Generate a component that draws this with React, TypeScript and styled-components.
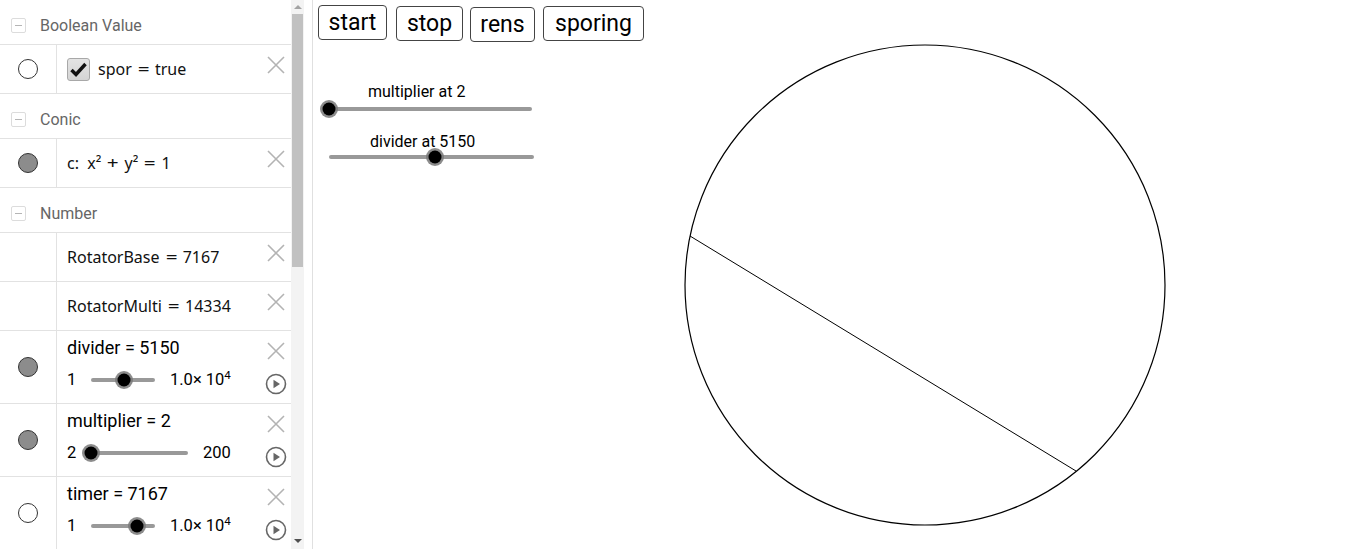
import React from "react";
import styled, { createGlobalStyle } from "styled-components";

const GlobalStyle = createGlobalStyle`
  html, body {
    margin: 0;
    padding: 0;
    background: #fff;
    overflow: hidden;
  }
  body {
    font-family: Roboto, "Liberation Sans", sans-serif;
    color: #000;
  }
`;

const Page = styled.div`
  display: flex;
  width: 1347px;
  height: 549px;
  overflow: hidden;
`;

/* ---------- algebra view ---------- */

const AlgebraView = styled.div`
  width: 291px;
  height: 549px;
  overflow: hidden;
  display: flex;
  flex-direction: column;
  flex-shrink: 0;
`;

const GroupHeader = styled.div`
  height: 38px;
  flex-shrink: 0;
  padding-top: 6px;
  border-bottom: 1px solid #e2e2e2;
  display: flex;
  align-items: center;
  padding-left: 11px;
  gap: 14px;
  color: #666;
  font-size: 16px;
`;

const Collapse = styled.span`
  width: 13px;
  height: 13px;
  border: 1px solid #dcdcdc;
  border-radius: 2px;
  display: flex;
  align-items: center;
  justify-content: center;

  &::after {
    content: "";
    width: 7px;
    height: 1px;
    background: #b5b5b5;
  }
`;

const ItemRow = styled.div<{ $tall?: boolean }>`
  display: flex;
  flex-shrink: 0;
  height: ${(p) => (p.$tall ? 72 : 48)}px;
  border-bottom: 1px solid #e2e2e2;
`;

const MarkerCell = styled.div`
  width: 56px;
  border-right: 1px solid #e2e2e2;
  display: flex;
  align-items: center;
  justify-content: center;
`;

const Marker = styled.span<{ $filled?: boolean }>`
  width: 18px;
  height: 18px;
  border-radius: 50%;
  border: 1px solid #333;
  background: ${(p) => (p.$filled ? "#8c8c8c" : "#fff")};
`;

const ContentCell = styled.div`
  flex: 1;
  display: flex;
  padding-left: 10px;
`;

const Body = styled.div<{ $tall?: boolean }>`
  flex: 1;
  display: flex;
  flex-direction: column;
  justify-content: ${(p) => (p.$tall ? "flex-start" : "center")};
  padding-top: ${(p) => (p.$tall ? 6 : 0)}px;
`;

const MathText = styled.div`
  font-family: "Noto Sans", "DejaVu Sans", sans-serif;
  font-size: 16px;
  display: flex;
  align-items: center;
  line-height: 20px;
  color: #111;
`;

const Op = styled.span`
  margin: 0 7px;
  display: inline-block;
  transform: scaleX(1.3);
`;

const Sup = styled.sup`
  font-size: 0.7em;
  vertical-align: 0.55em;
  line-height: 0;
`;

const Title = styled.div`
  font-size: 18px;
  line-height: 22px;
`;

const Tools = styled.div`
  width: 30px;
  display: flex;
  flex-direction: column;
  align-items: center;
  padding-top: 11px;
  gap: 13px;
`;

const CheckBox = styled.span`
  width: 21px;
  height: 21px;
  margin-right: 8px;
  border: 1px solid #a8a8a8;
  border-radius: 3px;
  background: linear-gradient(#e4e4e4, #d4d4d4);
  display: flex;
  align-items: center;
  justify-content: center;
`;

const SliderLine = styled.div`
  display: flex;
  align-items: center;
  margin-top: 11px;
  font-size: 16.5px;
`;

const MinLabel = styled.span`
  width: 24px;
`;

const MaxLabel = styled.span`
  margin-left: 15px;
`;

const Track = styled.div<{ $w: number }>`
  position: relative;
  width: ${(p) => p.$w}px;
  height: 4px;
  background: #999;
  border-radius: 2px;
`;

const Thumb = styled.span`
  position: absolute;
  top: 50%;
  width: 13px;
  height: 13px;
  border-radius: 50%;
  background: #000;
  box-shadow: 0 0 0 2.5px rgba(120, 120, 120, 0.85);
  transform: translate(-50%, -50%);
`;

const CloseIcon = () => (
  <svg width="18" height="18" viewBox="0 0 18 18">
    <path d="M1 1 L17 17 M17 1 L1 17" stroke="#b3b3b3" strokeWidth="1.6" fill="none" />
  </svg>
);

const PlayIcon = () => (
  <svg width="22" height="22" viewBox="0 0 22 22">
    <circle cx="11" cy="11" r="9.5" stroke="#666" strokeWidth="1.6" fill="none" />
    <path d="M8.5 6.8 L15 11 L8.5 15.2 Z" fill="#666" />
  </svg>
);

const CheckMark = () => (
  <svg width="17" height="15" viewBox="0 0 17 15">
    <path d="M1.5 8 L6 12.5 L15.5 2" stroke="#111" strokeWidth="3.4" fill="none" />
  </svg>
);

const Ten4 = () => (
  <span>
    1.0× 10<Sup>4</Sup>
  </span>
);

type SliderItem = {
  title: string;
  min: string;
  max: React.ReactNode;
  width: number;
  frac: number;
  filled: boolean;
};

const sliderItems: SliderItem[] = [
  { title: "divider = 5150", min: "1", max: <Ten4 />, width: 64, frac: 0.515, filled: true },
  { title: "multiplier = 2", min: "2", max: "200", width: 97, frac: 0, filled: true },
  { title: "timer = 7167", min: "1", max: <Ten4 />, width: 64, frac: 0.7166, filled: false },
];

const SimpleItem = ({
  marker,
  children,
}: {
  marker?: "filled" | "empty";
  children: React.ReactNode;
}) => (
  <ItemRow>
    <MarkerCell>{marker && <Marker $filled={marker === "filled"} />}</MarkerCell>
    <ContentCell>
      <Body>{children}</Body>
      <Tools>
        <CloseIcon />
      </Tools>
    </ContentCell>
  </ItemRow>
);

const Header = ({ label }: { label: string }) => (
  <GroupHeader>
    <Collapse />
    {label}
  </GroupHeader>
);

/* ---------- scrollbar ---------- */

const Scrollbar = styled.div`
  width: 13px;
  flex-shrink: 0;
  background: #f3f3f3;
  display: flex;
  flex-direction: column;
  align-items: center;
`;

const Arrow = styled.span<{ $down?: boolean }>`
  width: 0;
  height: 0;
  border-left: 4px solid transparent;
  border-right: 4px solid transparent;
  ${(p) =>
    p.$down
      ? "border-top: 4px solid #505050; margin-top: auto; margin-bottom: 6px;"
      : "border-bottom: 4px solid #a3a3a3; margin-top: 5px;"}
`;

const ScrollThumb = styled.div`
  width: 11px;
  height: 253px;
  margin-top: 5px;
  background: #c1c1c1;
`;

const Splitter = styled.div`
  width: 8px;
  flex-shrink: 0;
  border-right: 1px solid #e0e0e0;
  background: #fff;
`;

/* ---------- graphics view ---------- */

const Graphics = styled.div`
  position: relative;
  flex: 1;
  height: 549px;
`;

const ButtonBar = styled.div`
  position: absolute;
  left: 5px;
  top: 5px;
  display: flex;
  align-items: flex-start;
`;

const GgbButton = styled.button<{ $w: number; $dy: number; $gap: number }>`
  width: ${(p) => p.$w}px;
  height: 35px;
  margin-top: ${(p) => p.$dy}px;
  margin-right: ${(p) => p.$gap}px;
  padding: 0;
  border: 1px solid #444;
  border-radius: 4px;
  background: #fff;
  font-family: Roboto, "Liberation Sans", sans-serif;
  font-size: 23px;
  line-height: 30px;
  color: #000;
`;

const CanvasSlider = styled.div<{ $x: number; $y: number }>`
  position: absolute;
  left: ${(p) => p.$x}px;
  top: ${(p) => p.$y}px;
  display: flex;
  flex-direction: column;
`;

const SliderLabel = styled.span<{ $indent: number; $gap: number }>`
  margin-left: ${(p) => p.$indent}px;
  font-size: 16px;
  line-height: 18px;
  margin-bottom: ${(p) => p.$gap}px;
`;

const buttons = [
  { label: "start", w: 69, dy: 0, gap: 9 },
  { label: "stop", w: 67, dy: 1, gap: 7 },
  { label: "rens", w: 65, dy: 2, gap: 8 },
  { label: "sporing", w: 101, dy: 1, gap: 0 },
];

const App = () => (
  <>
    <GlobalStyle />
    <Page>
      <AlgebraView>
        <Header label="Boolean Value" />
        <SimpleItem marker="empty">
          <MathText>
            <CheckBox>
              <CheckMark />
            </CheckBox>
            spor<Op>=</Op>true
          </MathText>
        </SimpleItem>
        <Header label="Conic" />
        <SimpleItem marker="filled">
          <MathText>
            c:&nbsp;&nbsp;x²<Op>+</Op>y²<Op>=</Op>1
          </MathText>
        </SimpleItem>
        <Header label="Number" />
        <SimpleItem>
          <MathText>
            RotatorBase<Op>=</Op>7167
          </MathText>
        </SimpleItem>
        <SimpleItem>
          <MathText>
            RotatorMulti<Op>=</Op>14334
          </MathText>
        </SimpleItem>
        {sliderItems.map((s) => (
          <ItemRow $tall key={s.title}>
            <MarkerCell>
              <Marker $filled={s.filled} />
            </MarkerCell>
            <ContentCell>
              <Body $tall>
                <Title>{s.title}</Title>
                <SliderLine>
                  <MinLabel>{s.min}</MinLabel>
                  <Track $w={s.width}>
                    <Thumb style={{ left: `${s.frac * 100}%` }} />
                  </Track>
                  <MaxLabel>{s.max}</MaxLabel>
                </SliderLine>
              </Body>
              <Tools>
                <CloseIcon />
                <PlayIcon />
              </Tools>
            </ContentCell>
          </ItemRow>
        ))}
      </AlgebraView>
      <Scrollbar>
        <Arrow />
        <ScrollThumb />
        <Arrow $down />
      </Scrollbar>
      <Splitter />
      <Graphics>
        <svg width="1034" height="549" style={{ position: "absolute", left: 0, top: 0 }}>
          <circle cx="612" cy="285" r="240" fill="none" stroke="#000" strokeWidth="1.2" />
          <line x1="377" y1="236" x2="763" y2="471" stroke="#000" strokeWidth="1" />
        </svg>
        <ButtonBar>
          {buttons.map((b) => (
            <GgbButton key={b.label} $w={b.w} $dy={b.dy} $gap={b.gap}>
              {b.label}
            </GgbButton>
          ))}
        </ButtonBar>
        <CanvasSlider $x={16} $y={83}>
          <SliderLabel $indent={39} $gap={6}>
            multiplier at 2
          </SliderLabel>
          <Track $w={203}>
            <Thumb style={{ left: "0%" }} />
          </Track>
        </CanvasSlider>
        <CanvasSlider $x={16} $y={133}>
          <SliderLabel $indent={41} $gap={4}>
            divider at 5150
          </SliderLabel>
          <Track $w={205}>
            <Thumb style={{ left: "51.5%" }} />
          </Track>
        </CanvasSlider>
      </Graphics>
    </Page>
  </>
);

export default App;
